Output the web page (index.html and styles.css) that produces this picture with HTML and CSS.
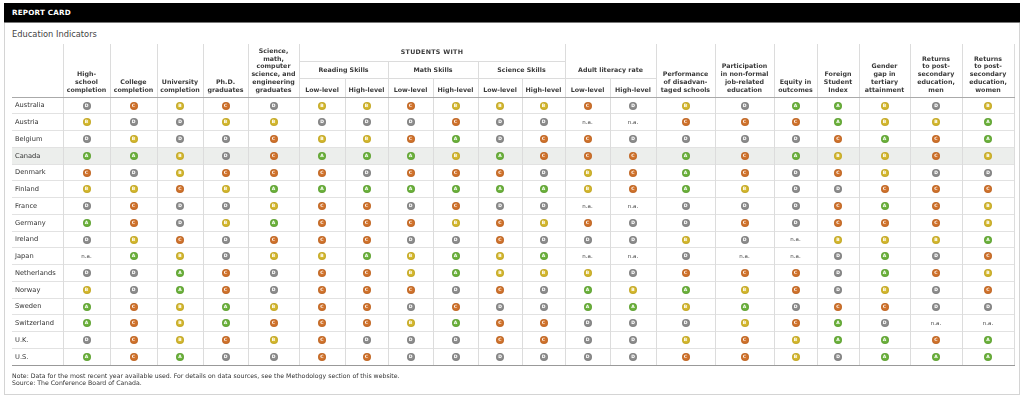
FILE: index.html
```html
<!DOCTYPE html>
<html>
<head>
<meta charset="utf-8">
<link rel="stylesheet" href="styles.css">
</head>
<body>
<div class="panel">
  <div class="bar">REPORT CARD</div>
  <div class="title">Education Indicators</div>
  <div class="content">
    <table class="rc">
      <colgroup>
        <col style="width:51px"><col style="width:47px"><col style="width:47px"><col style="width:46px"><col style="width:45px"><col style="width:51px">
        <col style="width:46px"><col style="width:43px"><col style="width:45px"><col style="width:45px"><col style="width:44px"><col style="width:43px">
        <col style="width:45px"><col style="width:46px"><col style="width:59px"><col style="width:59px"><col style="width:43px"><col style="width:42px">
        <col style="width:51px"><col style="width:52px"><col style="width:52px">
      </colgroup>
      <thead>
        <tr class="h1">
          <th class="blank" rowspan="3"></th>
          <th rowspan="3">High-<br>school<br>completion</th>
          <th rowspan="3">College<br>completion</th>
          <th rowspan="3">University<br>completion</th>
          <th rowspan="3">Ph.D.<br>graduates</th>
          <th rowspan="3">Science,<br>math,<br>computer<br>science, and<br>engineering<br>graduates</th>
          <th colspan="6" class="grp">STUDENTS WITH</th>
          <th colspan="2" rowspan="2">Adult literacy rate</th>
          <th rowspan="3">Performance<br>of disadvan-<br>taged schools</th>
          <th rowspan="3">Participation<br>in non-formal<br>job-related<br>education</th>
          <th rowspan="3">Equity in<br>outcomes</th>
          <th rowspan="3">Foreign<br>Student<br>Index</th>
          <th rowspan="3">Gender<br>gap in<br>tertiary<br>attainment</th>
          <th rowspan="3">Returns<br>to post-<br>secondary<br>education,<br>men</th>
          <th rowspan="3">Returns<br>to post-<br>secondary<br>education,<br>women</th>
        </tr>
        <tr class="h2">
          <th colspan="2">Reading Skills</th>
          <th colspan="2">Math Skills</th>
          <th colspan="2">Science Skills</th>
        </tr>
        <tr class="h3">
          <th>Low-level</th><th>High-level</th>
          <th>Low-level</th><th>High-level</th>
          <th>Low-level</th><th>High-level</th>
          <th>Low-level</th><th>High-level</th>
        </tr>
      </thead>
      <tbody>
        <tr><td class="c">Australia</td><td><span class="g gd">D</span></td><td><span class="g gc">C</span></td><td><span class="g gb">B</span></td><td><span class="g gc">C</span></td><td><span class="g gd">D</span></td><td><span class="g gb">B</span></td><td><span class="g gb">B</span></td><td><span class="g gc">C</span></td><td><span class="g gb">B</span></td><td><span class="g gb">B</span></td><td><span class="g gb">B</span></td><td><span class="g gc">C</span></td><td><span class="g gd">D</span></td><td><span class="g gb">B</span></td><td><span class="g gd">D</span></td><td><span class="g ga">A</span></td><td><span class="g ga">A</span></td><td><span class="g gb">B</span></td><td><span class="g gd">D</span></td><td><span class="g gb">B</span></td></tr>
        <tr><td class="c">Austria</td><td><span class="g gb">B</span></td><td><span class="g gd">D</span></td><td><span class="g gd">D</span></td><td><span class="g gb">B</span></td><td><span class="g gb">B</span></td><td><span class="g gd">D</span></td><td><span class="g gd">D</span></td><td><span class="g gd">D</span></td><td><span class="g gc">C</span></td><td><span class="g gd">D</span></td><td><span class="g gd">D</span></td><td class="na">n.a.</td><td class="na">n.a.</td><td><span class="g gc">C</span></td><td><span class="g gc">C</span></td><td><span class="g gc">C</span></td><td><span class="g ga">A</span></td><td><span class="g gb">B</span></td><td><span class="g gb">B</span></td><td><span class="g ga">A</span></td></tr>
        <tr><td class="c">Belgium</td><td><span class="g gd">D</span></td><td><span class="g gb">B</span></td><td><span class="g gd">D</span></td><td><span class="g gd">D</span></td><td><span class="g gc">C</span></td><td><span class="g gb">B</span></td><td><span class="g gb">B</span></td><td><span class="g gc">C</span></td><td><span class="g ga">A</span></td><td><span class="g gd">D</span></td><td><span class="g gc">C</span></td><td><span class="g gc">C</span></td><td><span class="g gd">D</span></td><td><span class="g gd">D</span></td><td><span class="g gd">D</span></td><td><span class="g gd">D</span></td><td><span class="g gc">C</span></td><td><span class="g ga">A</span></td><td><span class="g gc">C</span></td><td><span class="g ga">A</span></td></tr>
        <tr class="hl"><td class="c">Canada</td><td><span class="g ga">A</span></td><td><span class="g ga">A</span></td><td><span class="g gb">B</span></td><td><span class="g gd">D</span></td><td><span class="g gc">C</span></td><td><span class="g ga">A</span></td><td><span class="g ga">A</span></td><td><span class="g ga">A</span></td><td><span class="g gb">B</span></td><td><span class="g ga">A</span></td><td><span class="g gc">C</span></td><td><span class="g gc">C</span></td><td><span class="g gc">C</span></td><td><span class="g ga">A</span></td><td><span class="g gc">C</span></td><td><span class="g ga">A</span></td><td><span class="g gb">B</span></td><td><span class="g gb">B</span></td><td><span class="g gc">C</span></td><td><span class="g gb">B</span></td></tr>
        <tr><td class="c">Denmark</td><td><span class="g gc">C</span></td><td><span class="g gd">D</span></td><td><span class="g gb">B</span></td><td><span class="g gc">C</span></td><td><span class="g gc">C</span></td><td><span class="g gc">C</span></td><td><span class="g gd">D</span></td><td><span class="g gc">C</span></td><td><span class="g gc">C</span></td><td><span class="g gc">C</span></td><td><span class="g gd">D</span></td><td><span class="g gb">B</span></td><td><span class="g gc">C</span></td><td><span class="g ga">A</span></td><td><span class="g gc">C</span></td><td><span class="g gd">D</span></td><td><span class="g gc">C</span></td><td><span class="g gb">B</span></td><td><span class="g gd">D</span></td><td><span class="g gd">D</span></td></tr>
        <tr><td class="c">Finland</td><td><span class="g gb">B</span></td><td><span class="g gb">B</span></td><td><span class="g gc">C</span></td><td><span class="g gb">B</span></td><td><span class="g ga">A</span></td><td><span class="g ga">A</span></td><td><span class="g ga">A</span></td><td><span class="g ga">A</span></td><td><span class="g ga">A</span></td><td><span class="g ga">A</span></td><td><span class="g ga">A</span></td><td><span class="g gb">B</span></td><td><span class="g gc">C</span></td><td><span class="g ga">A</span></td><td><span class="g gb">B</span></td><td><span class="g gd">D</span></td><td><span class="g gd">D</span></td><td><span class="g gc">C</span></td><td><span class="g gc">C</span></td><td><span class="g gc">C</span></td></tr>
        <tr><td class="c">France</td><td><span class="g gd">D</span></td><td><span class="g gc">C</span></td><td><span class="g gd">D</span></td><td><span class="g gd">D</span></td><td><span class="g gb">B</span></td><td><span class="g gc">C</span></td><td><span class="g gc">C</span></td><td><span class="g gd">D</span></td><td><span class="g gc">C</span></td><td><span class="g gd">D</span></td><td><span class="g gd">D</span></td><td class="na">n.a.</td><td class="na">n.a.</td><td><span class="g gd">D</span></td><td><span class="g gd">D</span></td><td><span class="g gd">D</span></td><td><span class="g gc">C</span></td><td><span class="g ga">A</span></td><td><span class="g gc">C</span></td><td><span class="g gb">B</span></td></tr>
        <tr><td class="c">Germany</td><td><span class="g ga">A</span></td><td><span class="g gc">C</span></td><td><span class="g gd">D</span></td><td><span class="g gb">B</span></td><td><span class="g ga">A</span></td><td><span class="g gc">C</span></td><td><span class="g gc">C</span></td><td><span class="g gc">C</span></td><td><span class="g gb">B</span></td><td><span class="g gc">C</span></td><td><span class="g gb">B</span></td><td><span class="g gc">C</span></td><td><span class="g gd">D</span></td><td><span class="g gd">D</span></td><td><span class="g gc">C</span></td><td><span class="g gd">D</span></td><td><span class="g gc">C</span></td><td><span class="g gc">C</span></td><td><span class="g gc">C</span></td><td><span class="g gb">B</span></td></tr>
        <tr><td class="c">Ireland</td><td><span class="g gd">D</span></td><td><span class="g gb">B</span></td><td><span class="g gc">C</span></td><td><span class="g gd">D</span></td><td><span class="g gc">C</span></td><td><span class="g gc">C</span></td><td><span class="g gc">C</span></td><td><span class="g gd">D</span></td><td><span class="g gd">D</span></td><td><span class="g gc">C</span></td><td><span class="g gd">D</span></td><td><span class="g gd">D</span></td><td><span class="g gd">D</span></td><td><span class="g gb">B</span></td><td><span class="g gd">D</span></td><td class="na">n.a.</td><td><span class="g gb">B</span></td><td><span class="g gb">B</span></td><td><span class="g gb">B</span></td><td><span class="g ga">A</span></td></tr>
        <tr><td class="c">Japan</td><td class="na">n.a.</td><td><span class="g ga">A</span></td><td><span class="g gb">B</span></td><td><span class="g gd">D</span></td><td><span class="g gb">B</span></td><td><span class="g gb">B</span></td><td><span class="g ga">A</span></td><td><span class="g gb">B</span></td><td><span class="g ga">A</span></td><td><span class="g gb">B</span></td><td><span class="g ga">A</span></td><td class="na">n.a.</td><td class="na">n.a.</td><td><span class="g gd">D</span></td><td class="na">n.a.</td><td class="na">n.a.</td><td><span class="g gd">D</span></td><td><span class="g ga">A</span></td><td><span class="g gd">D</span></td><td><span class="g gc">C</span></td></tr>
        <tr><td class="c">Netherlands</td><td><span class="g gd">D</span></td><td><span class="g gd">D</span></td><td><span class="g ga">A</span></td><td><span class="g gc">C</span></td><td><span class="g gd">D</span></td><td><span class="g gc">C</span></td><td><span class="g gc">C</span></td><td><span class="g gb">B</span></td><td><span class="g ga">A</span></td><td><span class="g gb">B</span></td><td><span class="g gb">B</span></td><td><span class="g gb">B</span></td><td><span class="g gd">D</span></td><td><span class="g gc">C</span></td><td><span class="g gc">C</span></td><td><span class="g gc">C</span></td><td><span class="g gd">D</span></td><td><span class="g ga">A</span></td><td><span class="g gc">C</span></td><td><span class="g gb">B</span></td></tr>
        <tr><td class="c">Norway</td><td><span class="g gb">B</span></td><td><span class="g gd">D</span></td><td><span class="g ga">A</span></td><td><span class="g gc">C</span></td><td><span class="g gd">D</span></td><td><span class="g gc">C</span></td><td><span class="g gc">C</span></td><td><span class="g gc">C</span></td><td><span class="g gd">D</span></td><td><span class="g gc">C</span></td><td><span class="g gd">D</span></td><td><span class="g ga">A</span></td><td><span class="g gb">B</span></td><td><span class="g ga">A</span></td><td><span class="g gb">B</span></td><td><span class="g gc">C</span></td><td><span class="g gd">D</span></td><td><span class="g gb">B</span></td><td><span class="g gd">D</span></td><td><span class="g gc">C</span></td></tr>
        <tr><td class="c">Sweden</td><td><span class="g ga">A</span></td><td><span class="g gc">C</span></td><td><span class="g gb">B</span></td><td><span class="g ga">A</span></td><td><span class="g gb">B</span></td><td><span class="g gc">C</span></td><td><span class="g gc">C</span></td><td><span class="g gd">D</span></td><td><span class="g gc">C</span></td><td><span class="g gd">D</span></td><td><span class="g gd">D</span></td><td><span class="g ga">A</span></td><td><span class="g ga">A</span></td><td><span class="g gb">B</span></td><td><span class="g ga">A</span></td><td><span class="g gd">D</span></td><td><span class="g gc">C</span></td><td><span class="g gc">C</span></td><td><span class="g gd">D</span></td><td><span class="g gd">D</span></td></tr>
        <tr><td class="c">Switzerland</td><td><span class="g ga">A</span></td><td><span class="g gc">C</span></td><td><span class="g gb">B</span></td><td><span class="g ga">A</span></td><td><span class="g gc">C</span></td><td><span class="g gc">C</span></td><td><span class="g gc">C</span></td><td><span class="g gb">B</span></td><td><span class="g ga">A</span></td><td><span class="g gc">C</span></td><td><span class="g gc">C</span></td><td><span class="g gd">D</span></td><td><span class="g gd">D</span></td><td><span class="g gd">D</span></td><td><span class="g gb">B</span></td><td><span class="g gc">C</span></td><td><span class="g ga">A</span></td><td><span class="g gd">D</span></td><td class="na">n.a.</td><td class="na">n.a.</td></tr>
        <tr><td class="c">U.K.</td><td><span class="g gd">D</span></td><td><span class="g gc">C</span></td><td><span class="g gb">B</span></td><td><span class="g gc">C</span></td><td><span class="g gb">B</span></td><td><span class="g gc">C</span></td><td><span class="g gd">D</span></td><td><span class="g gd">D</span></td><td><span class="g gd">D</span></td><td><span class="g gc">C</span></td><td><span class="g gc">C</span></td><td><span class="g gd">D</span></td><td><span class="g gd">D</span></td><td><span class="g gb">B</span></td><td><span class="g gc">C</span></td><td><span class="g gb">B</span></td><td><span class="g ga">A</span></td><td><span class="g ga">A</span></td><td><span class="g gc">C</span></td><td><span class="g ga">A</span></td></tr>
        <tr><td class="c">U.S.</td><td><span class="g ga">A</span></td><td><span class="g gc">C</span></td><td><span class="g ga">A</span></td><td><span class="g gd">D</span></td><td><span class="g gd">D</span></td><td><span class="g gc">C</span></td><td><span class="g gc">C</span></td><td><span class="g gd">D</span></td><td><span class="g gd">D</span></td><td><span class="g gd">D</span></td><td><span class="g gd">D</span></td><td><span class="g gd">D</span></td><td><span class="g gd">D</span></td><td><span class="g gc">C</span></td><td><span class="g gc">C</span></td><td><span class="g gb">B</span></td><td><span class="g gd">D</span></td><td><span class="g ga">A</span></td><td><span class="g ga">A</span></td><td><span class="g ga">A</span></td></tr>
      </tbody>
    </table>
    <div class="note">
      <p>Note: Data for the most recent year available used. For details on data sources, see the Methodology section of this website.</p>
      <p>Source: The Conference Board of Canada.</p>
    </div>
  </div>
</div>
</body>
</html>
```
FILE: styles.css
```css
html, body {
  margin: 0;
  padding: 0;
  background: #fff;
}
body {
  font-family: "DejaVu Sans", Verdana, sans-serif;
  color: #333;
  -webkit-font-smoothing: antialiased;
}
.panel {
  margin: 3px 0 0 4px;
  width: 1016px;
  height: 392px;
  box-sizing: border-box;
  border: 1px solid #d4d4d4;
  border-top: none;
}
.bar {
  background: #000;
  height: 19px;
  margin: 0 -1px;
  color: #fff;
  font-weight: bold;
  font-size: 7.2px;
  letter-spacing: 0.2px;
  padding-left: 8px;
  display: flex;
  align-items: center;
  border-bottom: 1px solid #777;
}
.title {
  font-size: 8.3px;
  color: #444;
  height: 21px;
  padding: 6px 0 0 7px;
  box-sizing: border-box;
}
.content {
  padding: 0 0 0 7px;
  transform: translateZ(0);
}
.rc {
  table-layout: fixed;
  width: 1002px;
  border-collapse: collapse;
  border-spacing: 0;
}
.rc th {
  font-size: 6.3px;
  font-weight: bold;
  line-height: 7.8px;
  color: #3a3a3a;
  vertical-align: bottom;
  text-align: center;
  padding: 0 1px 3px;
  border-left: 1px solid #dcdcdc;
  border-right: 1px solid #dcdcdc;
  border-bottom: 1px solid #dcdcdc;
  white-space: nowrap;
}
.rc th.blank {
  border-left: none;
  border-bottom: 1px solid #aaa;
}
.rc thead tr.h1 { height: 17px; }
.rc thead tr.h2 { height: 17px; }
.rc thead tr.h3 { height: 19px; }
.rc thead tr.h1 th[rowspan="3"],
.rc thead tr.h3 th {
  border-bottom: 1px solid #aaa;
}
.rc th.grp {
  vertical-align: middle;
  padding-bottom: 0;
  letter-spacing: 0.3px;
}
.rc thead tr.h2 th {
  vertical-align: middle;
  padding-bottom: 0;
}
.rc thead tr.h1 th[rowspan="2"] {
  padding-bottom: 4px;
}
.rc tbody tr {
  height: 16.75px;
}
.rc td {
  height: 16.75px;
  padding: 0;
  font-size: 6px;
  line-height: 8px;
  text-align: center;
  vertical-align: middle;
  border-top: 1px solid #e2e2e2;
  border-left: 1px solid #dcdcdc;
  border-right: 1px solid #dcdcdc;
  box-sizing: border-box;
}
.rc td.c {
  text-align: left;
  padding-left: 3px;
  font-size: 6.7px;
  color: #333;
  border-left: none;
  white-space: nowrap;
}
.rc td.na {
  font-size: 5.5px;
  color: #444;
}
.rc tbody tr:last-child td {
  border-bottom: 1px solid #999;
}
.rc tr.hl td {
  background: #eceeec;
}
.g {
  display: inline-block;
  width: 8px;
  height: 8px;
  border-radius: 50%;
  color: #fff;
  font-size: 4.5px;
  font-weight: bold;
  line-height: 8px;
  text-align: center;
  vertical-align: middle;
  box-shadow: inset 0 0 0 1.2px rgba(0, 0, 0, 0.08);
}
.ga { background: #6cb33c; }
.gb { background: #d6b92e; }
.gc { background: #d2732c; }
.gd { background: #8e8e8e; }
.note {
  padding-top: 6px;
  font-size: 6.2px;
  line-height: 7.5px;
  color: #333;
}
.note p {
  margin: 0;
}
```
